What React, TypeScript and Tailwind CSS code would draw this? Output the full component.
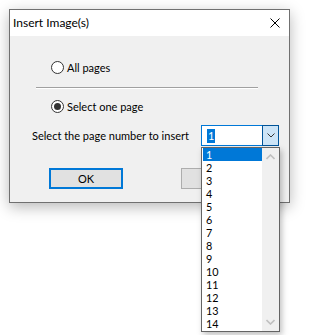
import React from "react";

const PAGES = Array.from({ length: 14 }, (_, i) => String(i + 1));

function Radio({ checked, label }: { checked?: boolean; label: string }) {
  return (
    <div className="flex items-center h-[13px]">
      <span className="w-[13px] h-[13px] rounded-full border border-[#333] bg-white flex items-center justify-center">
        {checked && <span className="w-[7px] h-[7px] rounded-full bg-[#333]" />}
      </span>
      <span className="ml-[3px] leading-[13px]">{label}</span>
    </div>
  );
}

export default function App() {
  return (
    <div
      className="relative w-[311px] h-[335px] bg-white text-[11px] text-black"
      style={{ fontFamily: 'Lato, "Noto Sans", sans-serif' }}
    >
      {/* Dialog */}
      <div className="absolute left-[9px] top-[9px] w-[281px] h-[194px] border border-[#707070] bg-[#f0f0f0] shadow-[0_4px_14px_rgba(0,0,0,0.28)]">
        <div className="h-[26px] bg-white flex items-center justify-between pl-[3px] pr-[9px]">
          <span className="leading-none text-[12px]">Insert Image(s)</span>
          <svg width="10" height="10" viewBox="0 0 10 10" className="stroke-black">
            <path d="M0.5 0.5L9.5 9.5M9.5 0.5L0.5 9.5" strokeWidth="1" fill="none" />
          </svg>
        </div>

        <div className="pt-[25px]">
          <div className="pl-[41px]">
            <Radio label="All pages" />
          </div>
          <div className="mt-[13px] ml-[26px] w-[222px] h-[2px] border-t border-[#a0a0a0] border-b border-b-white" />
          <div className="mt-[11px] pl-[41px]">
            <Radio checked label="Select one page" />
          </div>

          <div className="mt-[12px] flex items-center">
            <span className="ml-[22px] w-[169px] leading-none whitespace-nowrap">
              Select the page number to insert
            </span>
            <div className="flex h-[21px] w-[78px] bg-white">
              <div className="flex-1 flex items-center pl-[5px] border border-r-0 border-[#0078d7]">
                <span className="bg-[#0078d7] text-white px-[1px] leading-[14px]">1</span>
              </div>
              <div className="w-[17px] border border-[#005499] bg-[#cce4f7] flex items-center justify-center">
                <svg width="8" height="5" viewBox="0 0 8 5">
                  <path d="M0.5 0.5L4 4L7.5 0.5" stroke="#333" fill="none" strokeWidth="1" />
                </svg>
              </div>
            </div>
          </div>

          <div className="mt-[22px] flex">
            <button className="ml-[39px] w-[74px] h-[21px] border-2 border-[#0078d7] bg-[#e1e1e1] leading-none">
              OK
            </button>
            <button className="ml-[58px] w-[74px] h-[21px] border border-[#adadad] bg-[#e1e1e1] leading-none">
              Cancel
            </button>
          </div>
        </div>
      </div>

      {/* Open dropdown list */}
      <div className="absolute left-[201px] top-[147px] w-[79px] h-[185px] border border-[#646464] bg-white flex shadow-[2px_3px_6px_rgba(0,0,0,0.25)]">
        <div className="flex-1 pl-[1px] text-[10.8px]">
          {PAGES.map((p, i) => (
            <div
              key={p}
              className={`h-[13px] leading-[13px] pl-[3px] ${i === 0 ? "bg-[#0078d7] text-white" : ""}`}
            >
              {p}
            </div>
          ))}
        </div>
        <div className="w-[17px] bg-[#f0f0f0] flex flex-col items-center justify-between py-[6px]">
          <svg width="9" height="6" viewBox="0 0 9 6">
            <path d="M0.5 5L4.5 1L8.5 5" stroke="#c0c0c0" fill="none" strokeWidth="1.6" />
          </svg>
          <svg width="9" height="6" viewBox="0 0 9 6">
            <path d="M0.5 1L4.5 5L8.5 1" stroke="#c0c0c0" fill="none" strokeWidth="1.6" />
          </svg>
        </div>
      </div>
    </div>
  );
}
